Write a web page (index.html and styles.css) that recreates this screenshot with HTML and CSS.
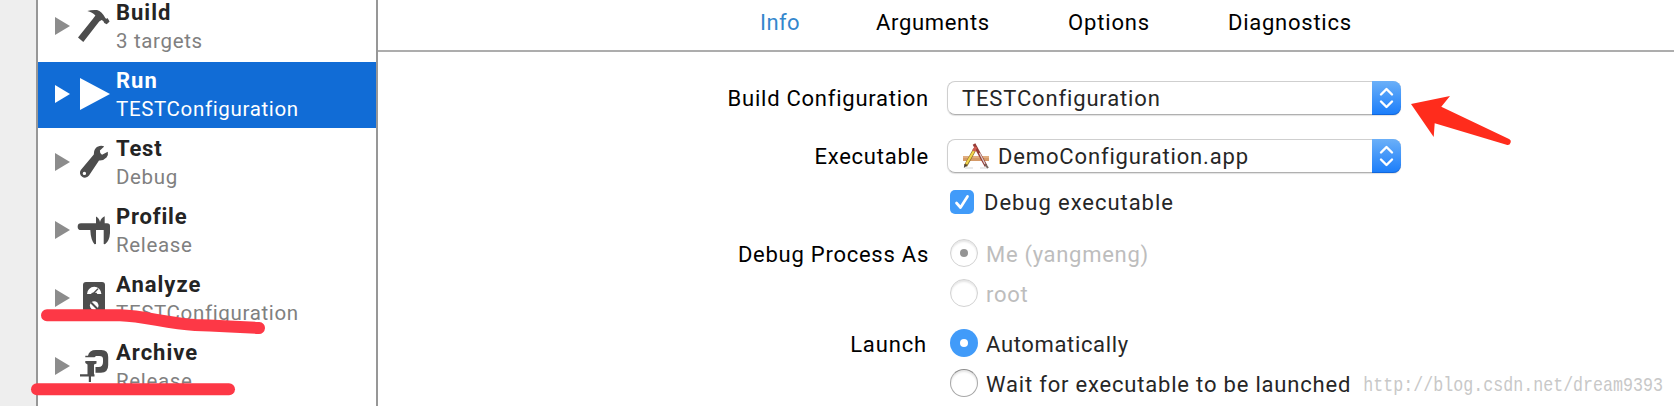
FILE: index.html
```html
<!DOCTYPE html>
<html lang="en">
<head>
<meta charset="utf-8">
<title>Scheme editor</title>
<link rel="stylesheet" href="styles.css">
</head>
<body>
<div class="window">
  <aside class="sidebar">
    <ul class="phases">
      <li class="phase">
        <svg class="disclosure" viewBox="0 0 16 18"><path d="M0 0L15 9L0 18Z"/></svg>
        <svg class="icon" viewBox="0 0 36 38"><path d="M11.3 5Q16 3.5 21 4Q26 5.5 29.5 12.3Q30.5 13.4 31.5 12L33.6 15.4L30.7 18.2L28.3 17Q27.6 14.4 25.6 14L23.2 15.6L7.3 36L2 31.6L17 12.8L19.4 9.6Q16.500 6 11.300 5Z"/></svg>
        <div class="text"><b class="t-build">Build</b><span class="s-targets">3 targets</span></div>
      </li>
      <li class="phase selected">
        <svg class="disclosure" viewBox="0 0 16 18"><path d="M0 0L15 9L0 18Z"/></svg>
        <svg class="icon" viewBox="0 0 36 38"><path d="M4 4L34 20L4 36Z"/></svg>
        <div class="text"><b class="t-run">Run</b><span class="s-config">TESTConfiguration</span></div>
      </li>
      <li class="phase">
        <svg class="disclosure" viewBox="0 0 16 18"><path d="M0 0L15 9L0 18Z"/></svg>
        <svg class="icon" viewBox="0 0 36 38"><path fill-rule="evenodd" d="M4.800 28L17.800 12.500Q17.500 5.500 23.500 4Q26.500 3.500 28.200 4.600L23.900 8.500Q23.600 11.500 26 12.700L31.800 9.800Q32.600 12.500 30.500 15.500Q27.500 18.800 23 18.400L13 33.500A4.700 4.700 0 1 1 4.800 28ZM8.400 29.700A1.700 1.700 0 1 0 8.400 33.100A1.700 1.700 0 1 0 8.400 29.700Z"/></svg>
        <div class="text"><b class="t-test">Test</b><span class="s-debug">Debug</span></div>
      </li>
      <li class="phase">
        <svg class="disclosure" viewBox="0 0 16 18"><path d="M0 0L15 9L0 18Z"/></svg>
        <svg class="icon" viewBox="0 0 36 38"><path d="M5 13.300H20V6.500Q23.300 8 24 12Q25 8 28.700 6.300V13.300H31Q34 13.300 34 16V23Q33.500 31 29 34.200L27.700 34V20H20V34L18.500 34.200Q14.800 30 14.300 20H5A3.300 3.300 0 0 1 5 13.300Z"/></svg>
        <div class="text"><b class="t-profile">Profile</b><span class="s-release">Release</span></div>
      </li>
      <li class="phase">
        <svg class="disclosure" viewBox="0 0 16 18"><path d="M0 0L15 9L0 18Z"/></svg>
        <svg class="icon" viewBox="0 0 36 38">
          <rect x="7" y="4" width="22" height="34" rx="3"/>
          <path class="cut" d="M11 16A7.200 7.200 0 0 1 25.400 16H21.300L20.500 14.800H16L15 16Z"/>
          <path class="mark" d="M17.300 15.500L22 10.700"/>
          <circle class="cut" cx="18.200" cy="27.500" r="4.300"/>
          <path class="mark wide" d="M15 24.500L21.500 31"/>
        </svg>
        <div class="text"><b class="t-analyze">Analyze</b><span class="s-config">TESTConfiguration</span></div>
      </li>
      <li class="phase">
        <svg class="disclosure" viewBox="0 0 16 18"><path d="M0 0L15 9L0 18Z"/></svg>
        <svg class="icon" viewBox="0 0 36 38"><path d="M9.300 11.300V9.800H12Q13 4 20 4H25.500Q32.200 4 32.200 11V19Q32.200 26.700 25 26.700H19.500V21H22.500Q27 21 27 16V13Q27 10 23.500 10H20L18.500 11.300ZM9.300 15H20.500V17.500L18 18.500V28.300H18.500V30.500H15V36H12.800V30.500H4V28.300H11.500V18.500L9.300 17Z"/></svg>
        <div class="text"><b class="t-archive">Archive</b><span class="s-release">Release</span></div>
      </li>
    </ul>
  </aside>
  <main class="editor">
    <nav class="tabs">
      <a class="tab active w-info">Info</a>
      <a class="tab w-arguments">Arguments</a>
      <a class="tab w-options">Options</a>
      <a class="tab w-diagnostics">Diagnostics</a>
    </nav>
    <section class="form">
      <div class="row row-build">
        <label class="w-build">Build Configuration</label>
        <div class="popup"><span class="value w-test">TESTConfiguration</span><span class="stepper"><svg viewBox="0 0 28 34"><path d="M9 13.500L14.500 8L20 13.500M9 20.500L14.500 26L20 20.500"/></svg></span></div>
      </div>
      <div class="row row-exec">
        <label class="w-exec">Executable</label>
        <div class="popup">
          <svg class="app" viewBox="0 0 28 28">
            <path d="M1 14H27V19H1Z" fill="#d59a68"/><path d="M1 15H27" stroke="#edc199"/>
            <path d="M3 26H11M18 26H26" stroke="#d5d5d5"/>
            <path d="M13 7L3.500 24" stroke="#8b6c28" stroke-width="3.500"/><path d="M12.800 7.500L4.300 22" stroke="#f3d64b" stroke-width="2.200"/>
            <path d="M2.600 22L1.800 26L5 23.500Z" fill="#443c36"/>
            <path d="M12 2L24 24" stroke="#963b35" stroke-width="3"/><path d="M17.500 11L23 22" stroke="#ddd2d0" stroke-width="1.300"/>
            <path d="M14 5L11.500 9" stroke="#d05b50" stroke-width="3"/><path d="M23 22L26 26" stroke="#75665f" stroke-width="2"/>
          </svg>
          <span class="value w-demo">DemoConfiguration.app</span><span class="stepper"><svg viewBox="0 0 28 34"><path d="M9 13.500L14.500 8L20 13.500M9 20.500L14.500 26L20 20.500"/></svg></span>
        </div>
      </div>
      <div class="row row-check">
        <label></label>
        <span class="checkbox"><svg viewBox="0 0 24 24"><path d="M6.500 13L10.500 17.500L17.500 6.500"/></svg></span><span class="option w-debugexec">Debug executable</span>
      </div>
      <div class="row row-radio disabled">
        <label class="w-process">Debug Process As</label>
        <span class="radio dot"></span><span class="option w-me">Me (yangmeng)</span>
      </div>
      <div class="row row-radio disabled">
        <label></label>
        <span class="radio"></span><span class="option w-root">root</span>
      </div>
      <div class="row row-radio row-launch">
        <label class="w-launch">Launch</label>
        <span class="radio on"></span><span class="option w-auto">Automatically</span>
      </div>
      <div class="row row-radio">
        <label></label>
        <span class="radio"></span><span class="option w-wait">Wait for executable to be launched</span>
        <span class="watermark">http://blog.csdn.net/dream9393</span>
      </div>
    </section>
  </main>
  <svg class="annotations" viewBox="0 0 1674 406">
    <path class="underline" d="M47 315.300H120C145 316 165 323 195 325Q225 326 259 328"/>
    <path class="underline" d="M37 389.300H229"/>
    <path class="arrow" d="M1411 104L1450 96L1441.300 106.700L1508.500 138.700A3.200 3.200 0 0 1 1506.500 144.800L1434.700 123.300L1433.700 137Z"/>
  </svg>
</div>
</body>
</html>
```
FILE: styles.css
```css
* { box-sizing: border-box; }
body { margin: 0; background: #fff; font-family: Roboto, "Liberation Sans", sans-serif; font-size: 22px; color: #000; }
.window { position: relative; display: flex; width: 1674px; height: 406px; overflow: hidden; }

.sidebar { width: 378px; flex: none; border-left: 36px solid #eee; overflow: hidden; }
.phases { list-style: none; margin: 0; padding: 0; height: 406px; border: solid #979797; border-width: 0 2px; overflow: hidden; }
.phase { display: flex; height: 66px; margin-bottom: 2px; padding-left: 17px; color: #242424; }
.phase:first-child { margin-top: -6px; }
.disclosure { width: 16px; height: 18px; margin: 23px 5px 0 0; fill: #8c8c8c; flex: none; }
.icon { width: 36px; height: 38px; margin-top: 12px; fill: #4d4d4d; flex: none; }
.cut { fill: #fff; }
.mark { stroke: #4d4d4d; stroke-width: 1.3; }
.mark.wide { stroke-width: 2; }
.text { display: flex; flex-direction: column; padding: 5px 0 0 4px; white-space: nowrap; }
.text b { font-size: 22px; font-weight: 700; line-height: 28px; letter-spacing: 1px; }
.text b.t-test, .text b.t-profile { letter-spacing: .8px; }
.text span { font-size: 20.500px; line-height: 28px; letter-spacing: .65px; color: #808080; }
.selected { background: #116cd6; color: #fff; }
.selected .text span { color: #fff; }
.selected svg { fill: #fff; }

.editor { flex: 1; min-width: 0; }
.tabs { display: flex; height: 52px; padding: 8px 0 0 382px; border-bottom: 2px solid #adadad; line-height: 29px; }
.tab { white-space: nowrap; }
.tab.active { color: #3487cd; }
.tab.w-info { width: 116px; letter-spacing: .4px; }
.tab.w-arguments { width: 192px; letter-spacing: .68px; }
.tab.w-options { width: 160px; letter-spacing: .85px; }
.tab.w-diagnostics { letter-spacing: .75px; }

.form { padding-top: 29px; color: #262626; }
.row { display: flex; align-items: center; white-space: nowrap; line-height: 28px; letter-spacing: .75px; }
.row label { width: 551px; margin-right: 18px; text-align: right; color: #000; flex: none; }
.row .w-launch { padding-right: 2px; }
.row .w-test, .row .w-demo, .w-launch { letter-spacing: .85px; }
.row-build { height: 34px; }
.row-exec { height: 34px; margin-top: 24px; }
.row-build label, .row-exec label, .value, .w-debugexec { padding-top: 2px; }
.w-debugexec { letter-spacing: .95px; }
.w-me { letter-spacing: .7px; }
.w-auto { letter-spacing: .65px; }
.w-wait { letter-spacing: .81px; }
.row-check { height: 24px; margin-top: 17px; margin-bottom: 25px; }
.row-radio { height: 28px; margin-bottom: 12px; }
.row-launch { margin-top: 22px; }
.row-radio label, .row-radio .option { padding-top: 3px; }
.popup { display: flex; align-items: center; width: 454px; height: 34px; padding-left: 14px; border: 1px solid #cfcfcf; border-bottom-color: #b0b0b0; border-right: 0; border-radius: 8px; box-shadow: 0 1px 1px rgba(0,0,0,.12); }
.stepper { width: 29px; height: 34px; margin: -1px 0 -1px auto; border-radius: 0 8px 8px 0; background: linear-gradient(#6bb0f8, #1a7dfa); box-shadow: inset 0 -1px 0 rgba(0,60,160,.35); }
.stepper svg { display: block; width: 28px; height: 34px; fill: none; stroke: #fff; stroke-width: 2.400; stroke-linecap: round; stroke-linejoin: round; }
.app { width: 28px; height: 28px; margin-right: 8px; fill: none; }
.checkbox { width: 24px; height: 24px; margin: 0 10px 0 3px; border-radius: 5px; background: #419bf9; }
.checkbox svg { display: block; fill: none; stroke: #fff; stroke-width: 2.700; stroke-linecap: round; stroke-linejoin: round; }
.radio { display: flex; width: 28px; height: 28px; margin: 0 8px 0 3px; border: 1px solid #a8a8a8; border-top-color: #8c8c8c; border-radius: 50%; box-shadow: inset 0 2px 2px rgba(0,0,0,.1); flex: none; }
.radio.on, .radio.dot { align-items: center; justify-content: center; }
.radio.on { border: 0; background: #419bf9; box-shadow: none; }
.radio.on::after, .radio.dot::after { content: ""; width: 8px; height: 8px; border-radius: 50%; background: #fff; }
.radio.dot::after { background: #949494; }
.disabled .radio { border-color: #d2d2d2; }
.disabled .option { color: #bdbdbd; }
.watermark { margin-left: 12px; padding-top: 6px; font: 16.667px/28px "Liberation Mono", monospace; letter-spacing: 0; color: #c8c8c8; transform: scaleY(1.2); }

.annotations { position: absolute; left: 0; top: 0; width: 1674px; height: 406px; }
.underline { fill: none; stroke: #fd3846; stroke-width: 12; stroke-linecap: round; }
.arrow { fill: #ff2c1c; }
```
